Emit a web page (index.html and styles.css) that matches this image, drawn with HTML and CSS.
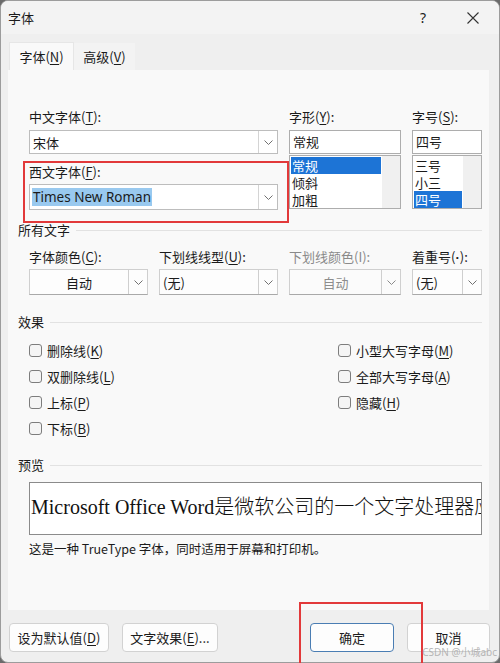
FILE: index.html
```html
<!DOCTYPE html>
<html lang="zh-CN">
<head>
<meta charset="utf-8">
<title>字体</title>
<link rel="stylesheet" href="styles.css">
</head>
<body>
<div class="window">
  <div class="titlebar">
    <span class="title">字体</span>
    <span class="tb-spacer"></span>
    <span class="tb-btn help">?</span>
    <span class="tb-btn close">
      <svg width="12" height="12" viewBox="0 0 12 12"><path d="M0.5 0.5 L11.5 11.5 M11.5 0.5 L0.5 11.5" stroke="#333" stroke-width="1.1" fill="none"/></svg>
    </span>
  </div>
  <div class="tabs">
    <div class="tab active">字体(<u>N</u>)</div>
    <div class="tab">高级(<u>V</u>)</div>
  </div>
  <div class="panel">
    <div class="fontgrid">
      <div class="lbl">中文字体(<u>T</u>):</div>
      <div class="lbl">字形(<u>Y</u>):</div>
      <div class="lbl">字号(<u>S</u>):</div>

      <div class="combo top-input">
        <span class="val">宋体</span>
        <span class="drop"><svg width="9" height="5" viewBox="0 0 9 5"><polyline points="0.5,0.5 4.5,4.5 8.5,0.5" fill="none" stroke="#707070" stroke-width="1"/></svg></span>
      </div>
      <div class="textbox top-input">常规</div>
      <div class="textbox top-input">四号</div>

      <div class="west">
        <div class="lbl west-lbl">西文字体(<u>F</u>):</div>
        <div class="combo tall">
          <span class="val"><span class="selected-text">Times New Roman</span></span>
          <span class="drop"><svg width="9" height="5" viewBox="0 0 9 5"><polyline points="0.5,0.5 4.5,4.5 8.5,0.5" fill="none" stroke="#707070" stroke-width="1"/></svg></span>
        </div>
      </div>
      <div class="list">
        <div class="items">
          <div class="item sel">常规</div>
          <div class="item">倾斜</div>
          <div class="item">加粗</div>
        </div>
        <div class="sb"></div>
      </div>
      <div class="list">
        <div class="items">
          <div class="item">三号</div>
          <div class="item">小三</div>
          <div class="item sel">四号</div>
        </div>
        <div class="sb"></div>
      </div>
    </div>

    <div class="group-head first-head"><span>所有文字</span><span class="rule"></span></div>
    <div class="textgrid">
      <div class="lbl">字体颜色(<u>C</u>):</div>
      <div class="lbl">下划线线型(<u>U</u>):</div>
      <div class="lbl disabled">下划线颜色(I):</div>
      <div class="lbl">着重号(<span class="dot">·</span>):</div>

      <div class="combo raised">
        <span class="val center">自动</span>
        <span class="drop"><svg width="9" height="5" viewBox="0 0 9 5"><polyline points="0.5,0.5 4.5,4.5 8.5,0.5" fill="none" stroke="#707070" stroke-width="1"/></svg></span>
      </div>
      <div class="combo raised">
        <span class="val">(无)</span>
        <span class="drop"><svg width="9" height="5" viewBox="0 0 9 5"><polyline points="0.5,0.5 4.5,4.5 8.5,0.5" fill="none" stroke="#707070" stroke-width="1"/></svg></span>
      </div>
      <div class="combo raised off">
        <span class="val center">自动</span>
        <span class="drop"><svg width="9" height="5" viewBox="0 0 9 5"><polyline points="0.5,0.5 4.5,4.5 8.5,0.5" fill="none" stroke="#8a8a8a" stroke-width="1"/></svg></span>
      </div>
      <div class="combo raised">
        <span class="val">(无)</span>
        <span class="drop"><svg width="9" height="5" viewBox="0 0 9 5"><polyline points="0.5,0.5 4.5,4.5 8.5,0.5" fill="none" stroke="#707070" stroke-width="1"/></svg></span>
      </div>
    </div>

    <div class="group-head fx-head"><span>效果</span><span class="rule"></span></div>
    <div class="checks">
      <div class="chk"><span class="box"></span>删除线(<u>K</u>)</div>
      <div class="chk"><span class="box"></span>小型大写字母(<u>M</u>)</div>
      <div class="chk"><span class="box"></span>双删除线(<u>L</u>)</div>
      <div class="chk"><span class="box"></span>全部大写字母(<u>A</u>)</div>
      <div class="chk"><span class="box"></span>上标(<u>P</u>)</div>
      <div class="chk"><span class="box"></span>隐藏(<u>H</u>)</div>
      <div class="chk"><span class="box"></span>下标(<u>B</u>)</div>
    </div>

    <div class="group-head pv-head"><span>预览</span><span class="rule"></span></div>
    <div class="preview">Microsoft Office Word是微软公司的一个文字处理器应用程序</div>
    <div class="desc">这是一种 TrueType 字体，同时适用于屏幕和打印机。</div>
  </div>

  <div class="footer">
    <button class="btn b-default">设为默认值(<u>D</u>)</button>
    <button class="btn b-effect">文字效果(<u>E</u>)...</button>
    <span class="ft-spacer"></span>
    <button class="btn b-ok">确定</button>
    <button class="btn b-cancel">取消</button>
  </div>
</div>
<div class="mark mark-west"></div>
<div class="mark mark-ok"></div>
<div class="watermark">CSDN @小城abc</div>
</body>
</html>
```

FILE: styles.css
```css
html, body {
  margin: 0;
  padding: 0;
}
body {
  width: 500px;
  height: 663px;
  overflow: hidden;
  background: #6b6b6b;
  font-family: "Noto Sans CJK SC", "Noto Sans", sans-serif;
  font-size: 13px;
  color: #1b1b1b;
}
u {
  text-decoration: underline;
  text-underline-offset: 2px;
  text-decoration-thickness: 1px;
}
.dot {
  font-family: "Liberation Sans", sans-serif;
  font-weight: bold;
}
.window {
  box-sizing: border-box;
  width: 500px;
  height: 663px;
  border: 1px solid #9c9c9c;
  border-radius: 8px;
  background: #efefef;
  overflow: hidden;
}
.titlebar {
  height: 33px;
  display: flex;
  align-items: center;
  padding-left: 7px;
  background: #f3f3f3;
}
.title {
  line-height: 16px;
}
.tb-spacer { flex: 1; }
.tb-btn {
  height: 33px;
  display: flex;
  align-items: center;
  justify-content: center;
}
.help {
  width: 46px;
  font-family: "Noto Sans", sans-serif;
  font-size: 14px;
}
.close {
  width: 53px;
}
.tabs {
  display: flex;
  align-items: flex-end;
  margin-top: 8px;
  margin-left: 8px;
  height: 28px;
}
.tab {
  box-sizing: border-box;
  height: 27px;
  display: flex;
  align-items: center;
  justify-content: center;
  line-height: 16px;
  background: #f3f3f3;
  width: 61px;
}
.tab.active {
  height: 28px;
  width: 65px;
  background: #f9f9f9;
  border: 1px solid #e6e6e6;
  border-bottom: none;
}
.panel {
  box-sizing: border-box;
  margin-left: 7px;
  width: 481px;
  height: 540px;
  background: #f9f9f9;
  padding: 39px 7px 0 10px;
}
.lbl {
  line-height: 16px;
  height: 16px;
  white-space: nowrap;
}
.lbl.disabled { color: #8a8a8a; }
.fontgrid {
  display: grid;
  grid-template-columns: 249px 112px 70px;
  column-gap: 11px;
  padding-left: 11px;
  align-items: start;
}
.top-input { margin-top: 5px; }
.combo {
  box-sizing: border-box;
  display: flex;
  height: 24px;
  border: 1px solid #bdbdbd;
  background: #fff;
}
.combo.tall { height: 26px; margin-top: 4px; }
.val {
  flex: 1;
  padding-left: 3px;
  display: flex;
  align-items: center;
  white-space: nowrap;
  overflow: hidden;
}
.val.center { justify-content: center; padding-left: 0; }
.drop {
  width: 18px;
  border-left: 1px solid #d4d4d4;
  display: flex;
  align-items: center;
  justify-content: center;
}
.selected-text {
  font-family: "Noto Sans", sans-serif;
  font-size: 13.5px;
  line-height: 18px;
  background: #99c9ef;
  padding: 0 1px;
  margin-left: -1px;
}
.textbox {
  box-sizing: border-box;
  height: 24px;
  border: 1px solid #adadad;
  background: #fff;
  padding-left: 3px;
  line-height: 22px;
}
.west-lbl { margin-top: 10px; }
.list {
  box-sizing: border-box;
  margin-top: 1px;
  height: 54px;
  border: 1px solid #adadad;
  background: #fff;
  display: flex;
}
.items {
  flex: 1;
  padding: 1px 1px 0 1px;
}
.item {
  height: 17px;
  line-height: 17px;
  padding-left: 1px;
}
.item.sel {
  background: #1d74d6;
  color: #fff;
}
.sb {
  width: 18px;
  background: #f0f0f0;
}
.group-head {
  display: flex;
  align-items: center;
  height: 16px;
  line-height: 16px;
}
.group-head .rule {
  flex: 1;
  border-top: 1px solid #e2e2e2;
  margin-left: 6px;
}
.first-head { margin-top: 12px; }
.textgrid {
  display: grid;
  grid-template-columns: 119px 119px 112px 70px;
  column-gap: 11px;
  row-gap: 4px;
  padding-left: 11px;
  margin-top: 11px;
}
.combo.raised {
  height: 26px;
  border: 1px solid #cfcfcf;
  border-bottom-color: #a9a9a9;
  background: #fdfdfd;
}
.combo.raised .drop {
  border-left: 1px solid #cfcfcf;
}
.combo.off {
  color: #8d8d8d;
  background: #fbfbfb;
}
.fx-head { margin-top: 19px; }
.checks {
  display: grid;
  grid-template-columns: 309px 1fr;
  grid-auto-rows: 26px;
  padding-left: 11px;
  margin-top: 7px;
}
.chk {
  display: flex;
  align-items: center;
  white-space: nowrap;
}
.box {
  box-sizing: border-box;
  width: 13px;
  height: 13px;
  border: 1px solid #7d7d7d;
  border-radius: 3px;
  background: #f5f5f5;
  margin-right: 5px;
}
.pv-head { margin-top: 16px; }
.preview {
  box-sizing: border-box;
  margin-top: 9px;
  margin-left: 11px;
  width: 453px;
  height: 53px;
  border: 1px solid #8b8b8b;
  background: #fff;
  padding: 13px 0 0 1px;
  font-family: "Liberation Serif", "Noto Sans CJK SC", serif;
  font-size: 20px;
  font-weight: 300;
  line-height: 22px;
  white-space: nowrap;
  overflow: hidden;
  color: #111;
}
.desc {
  margin-top: 6px;
  margin-left: 11px;
  font-size: 12.5px;
  line-height: 16px;
}
.footer {
  display: flex;
  margin-top: 13px;
  padding: 0 9px 0 8px;
  gap: 13px;
}
.ft-spacer { flex: 1; }
.btn {
  box-sizing: border-box;
  height: 29px;
  border: 1px solid #d2d2d2;
  border-radius: 4px;
  background: #fdfdfd;
  font-family: "Noto Sans CJK SC", "Noto Sans", sans-serif;
  font-size: 13px;
  color: #1b1b1b;
  padding: 0;
  line-height: 16px;
}
.b-default { width: 100px; }
.b-effect { width: 96px; }
.b-ok {
  width: 84px;
  border-color: #4a7db3;
}
.b-cancel { width: 83px; }
.mark {
  position: absolute;
  box-sizing: border-box;
  border: 2px solid #e2393a;
  pointer-events: none;
}
.mark-west {
  left: 23px;
  top: 161px;
  width: 266px;
  height: 62px;
}
.mark-ok {
  left: 299px;
  top: 602px;
  width: 124px;
  height: 70px;
}
.watermark {
  position: absolute;
  right: 3px;
  top: 646px;
  font-family: "Noto Sans", "Noto Sans CJK SC", sans-serif;
  font-size: 10px;
  line-height: 12px;
  color: rgba(160, 160, 160, 0.75);
}
```
